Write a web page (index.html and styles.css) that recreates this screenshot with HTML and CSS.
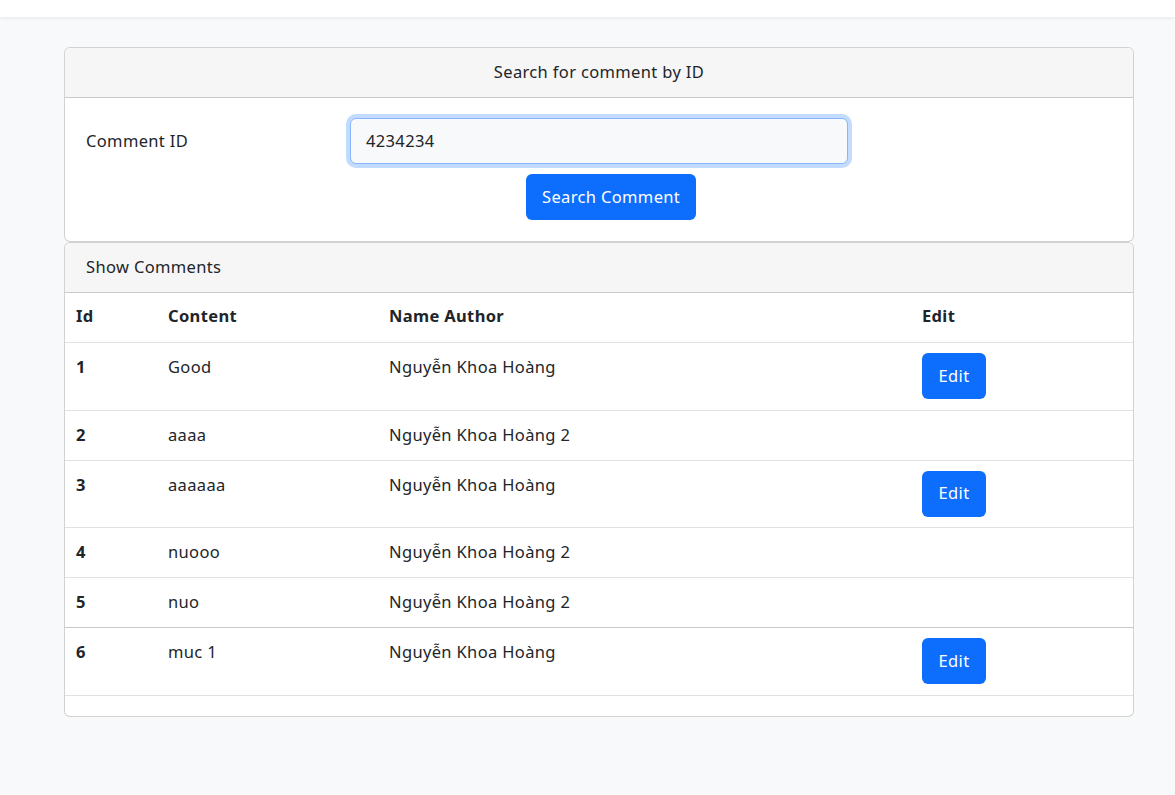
FILE: index.html
```html
<!DOCTYPE html>
<html lang="vi">
<head>
<meta charset="utf-8">
<title>Comments</title>
<link rel="stylesheet" href="styles.css">
</head>
<body>
<nav class="topbar"></nav>
<main class="container">
  <section class="card">
    <div class="card-header center">Search for comment by ID</div>
    <div class="card-body search-body">
      <div class="form-row">
        <label class="form-label" for="cid">Comment ID</label>
        <input id="cid" class="form-input" type="text" value="4234234">
      </div>
      <div class="btn-row">
        <button class="btn">Search Comment</button>
      </div>
    </div>
  </section>
  <section class="card">
    <div class="card-header">Show Comments</div>
    <div class="card-body table-body">
      <table class="table">
        <colgroup>
          <col class="c-id"><col class="c-content"><col class="c-author"><col class="c-edit">
        </colgroup>
        <thead>
          <tr><th>Id</th><th>Content</th><th>Name Author</th><th>Edit</th></tr>
        </thead>
        <tbody>
          <tr><th>1</th><td>Good</td><td>Nguyễn Khoa Hoàng</td><td class="btn-cell"><button class="btn btn-sm">Edit</button></td></tr>
          <tr><th>2</th><td>aaaa</td><td>Nguyễn Khoa Hoàng 2</td><td></td></tr>
          <tr><th>3</th><td>aaaaaa</td><td>Nguyễn Khoa Hoàng</td><td class="btn-cell"><button class="btn btn-sm">Edit</button></td></tr>
          <tr><th>4</th><td>nuooo</td><td>Nguyễn Khoa Hoàng 2</td><td></td></tr>
          <tr class="divider"><th>5</th><td>nuo</td><td>Nguyễn Khoa Hoàng 2</td><td></td></tr>
          <tr><th>6</th><td>muc 1</td><td>Nguyễn Khoa Hoàng</td><td class="btn-cell"><button class="btn btn-sm">Edit</button></td></tr>
        </tbody>
      </table>
    </div>
  </section>
</main>
</body>
</html>
```
FILE: styles.css
```css
* { box-sizing: border-box; }
html, body { margin: 0; padding: 0; }
body {
  background: #f8f9fa;
  font-family: "Noto Sans", "Open Sans", sans-serif;
  font-size: 16.5px;
  letter-spacing: 0.35px;
  color: #212529;
  line-height: 25px;
}
.topbar {
  height: 17px;
  background: #fff;
  box-shadow: 0 1px 4px rgba(0,0,0,.08);
}
.container {
  width: 1070px;
  margin: 30px 0 0 64px;
}
.card {
  background: #fff;
  border: 1px solid rgba(0,0,0,.175);
  border-radius: 6px;
  overflow: hidden;
}
.card-header {
  height: 50px;
  padding: 11px 21px 13px;
  background: #f6f6f6;
  border-bottom: 1px solid rgba(0,0,0,.175);
}
.card-header.center { text-align: center; }
.search-body { padding: 20px 21px 20px; height: 143px; }
.form-row {
  display: flex;
  align-items: center;
  height: 46px;
}
.form-label { width: 264px; padding-bottom: 2px; }
.form-input {
  width: 498px;
  height: 46px;
  border: 1px solid #86b7fe;
  border-radius: 6px;
  background: #f8f9fa;
  box-shadow: 0 0 0 4px rgba(13,110,253,.25);
  padding: 0 15px 2px;
  font: inherit;
  letter-spacing: inherit;
  color: #212529;
  outline: none;
}
.btn-row {
  display: flex;
  padding-left: 440px;
  margin-top: 10px;
}
.btn {
  height: 46px;
  padding: 0 16px 2px;
  background: #0d6efd;
  color: #fff;
  border: 0;
  border-radius: 6px;
  font: inherit;
  letter-spacing: inherit;
}
.btn-sm { width: 64px; padding: 0 0 2px; }
.table-body { padding: 0 0 20px; }
.table {
  width: 100%;
  border-collapse: collapse;
  table-layout: fixed;
}
.c-id { width: 92px; }
.c-content { width: 221px; }
.c-author { width: 533px; }
.c-edit { width: auto; }
.table th, .table td {
  text-align: left;
  vertical-align: top;
  padding: 11px 11px 13px;
  border-bottom: 1px solid #dee2e6;
}
.table thead th { padding-top: 10px; padding-bottom: 14px; }
.table th { font-weight: 700; }
.table td { font-weight: 400; }
.table tr.divider th, .table tr.divider td { border-bottom: 1px solid #c4c8cc; }
.table td.btn-cell { padding-top: 10px; padding-bottom: 10.5px; }
.btn-cell .btn { display: block; }
```
